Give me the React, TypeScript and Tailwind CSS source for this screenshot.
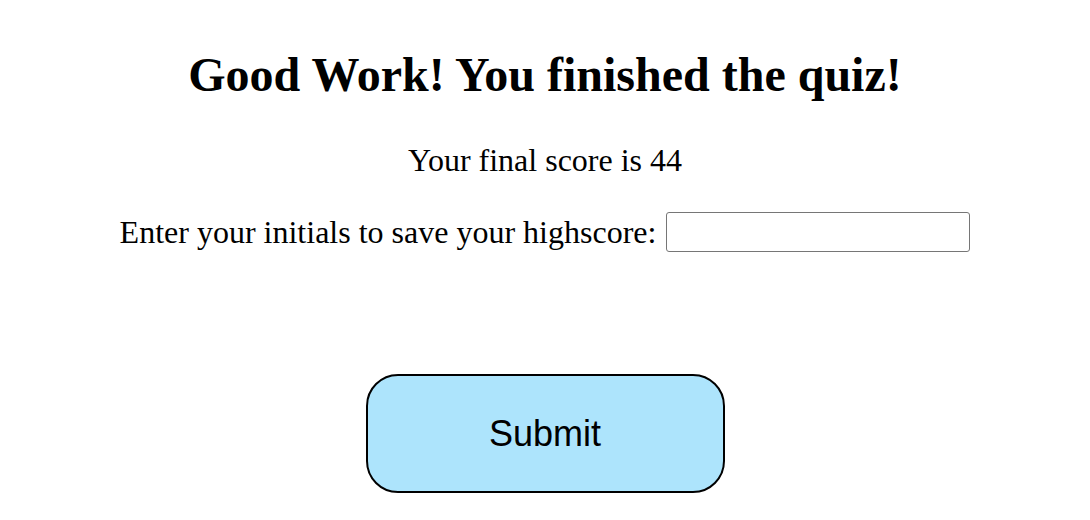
export default function App() {
  return (
    <div className="flex flex-col items-center bg-white text-black font-['Liberation_Serif',serif] min-h-[520px]">
      <h1 className="mt-[46px] text-[48px] font-bold leading-[58px]">Good Work! You finished the quiz!</h1>
      <p className="mt-[38px] text-[32px] leading-[37px]">Your final score is 44</p>
      <div className="mt-[33px] flex items-center gap-[10px]">
        <label htmlFor="initials" className="text-[32px] leading-[37px]">Enter your initials to save your highscore:</label>
        <input id="initials" type="text" className="w-[304px] h-[40px] border border-[#767676] rounded-[3px] bg-white" />
      </div>
      <button className="mt-[122px] w-[359px] h-[119px] shrink-0 rounded-[32px] border-2 border-black bg-[#ade4fc] font-['Liberation_Sans',sans-serif] text-[36px]">
        Submit
      </button>
    </div>
  );
}
